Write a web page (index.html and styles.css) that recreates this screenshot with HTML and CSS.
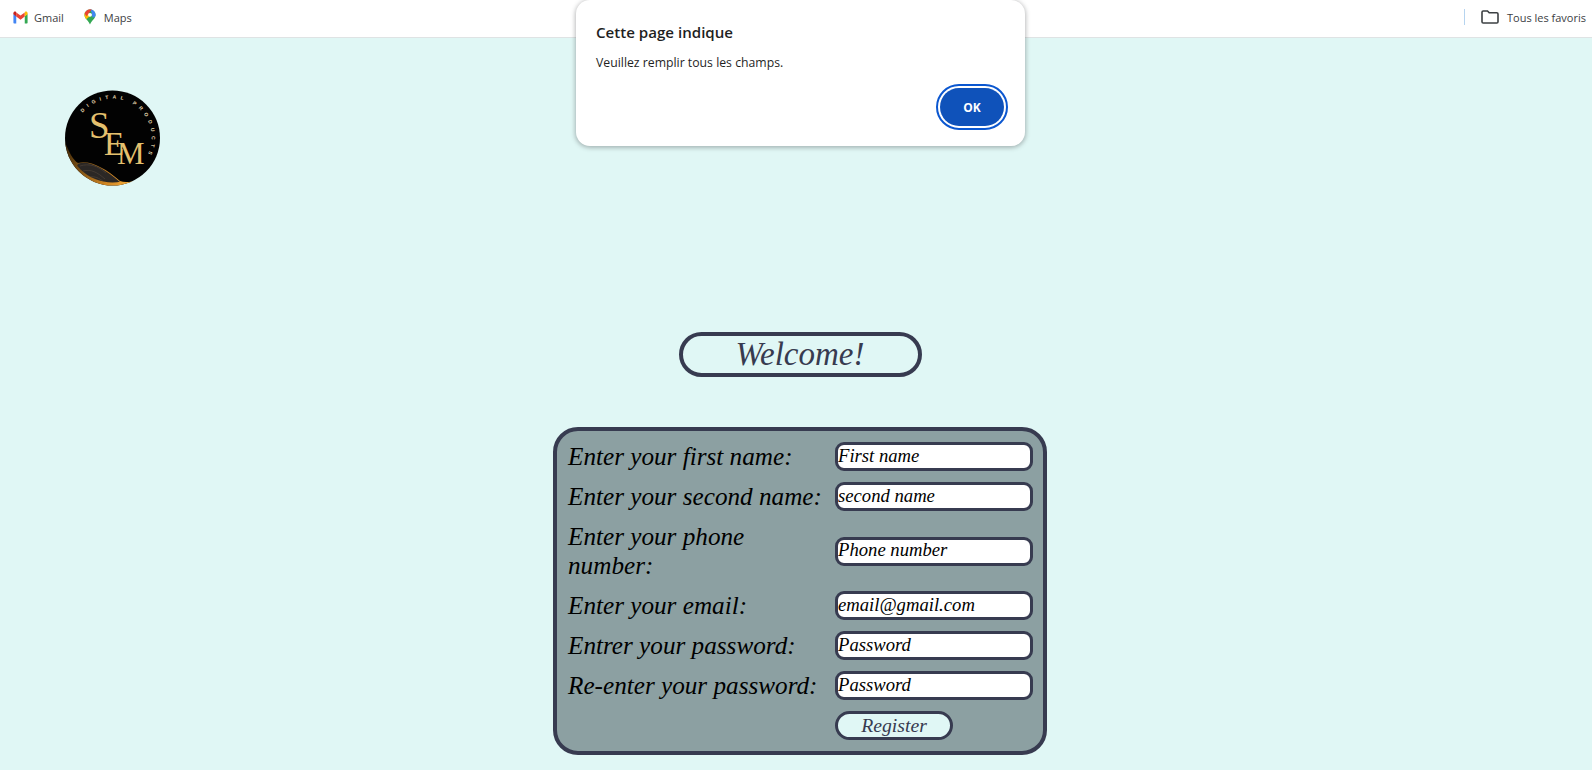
FILE: index.html
```html
<!DOCTYPE html>
<html lang="fr">
<head>
<meta charset="utf-8">
<title>Register</title>
<link rel="stylesheet" href="styles.css">
</head>
<body>
<nav class="bookmarks">
  <a class="bookmark">
    <svg class="icon-gmail" viewBox="0 0 24 24" width="17" height="17">
      <path fill="#4285F4" d="M2 19.500c0 .6.5 1 1 1h3V10L2 7z"/>
      <path fill="#34A853" d="M18 20.500h3c.6 0 1-.4 1-1V7l-4 3z"/>
      <path fill="#EA4335" d="M6 10.500l6 4.500 6-4.500V4.800l-6 4.500-6-4.500z"/>
      <path fill="#FBBC04" d="M18 4.800v5.700l4-3V6c0-2-2.200-3-3.800-1.800z"/>
      <path fill="#C5221F" d="M2 7.500l4 3V4.800l-.2-.6C4.200 3 2 4 2 6z"/>
    </svg>
    <span>Gmail</span>
  </a>
  <a class="bookmark">
    <svg class="icon-maps" viewBox="0 0 14 18" width="12" height="16">
      <defs><clipPath id="pin"><path d="M7 0a6.500 6.500 0 0 0-6.500 6.500C.5 11 5 13 7 18c2-5 6.500-7 6.500-11.500A6.500 6.500 0 0 0 7 0z"/></clipPath></defs>
      <g clip-path="url(#pin)">
        <rect width="14" height="18" fill="#34A853"/>
        <path fill="#FBBC04" d="M0 3h5l3 4-7 6-1-2z"/>
        <path fill="#4285F4" d="M7 0h7v8l-4 2-1-6z"/>
        <path fill="#EA4335" d="M0 4L5-1h5L3 8z"/>
      </g>
      <circle cx="7" cy="6.500" r="2.300" fill="#fff"/>
    </svg>
    <span>Maps</span>
  </a>
  <div class="bookmarks-end">
    <i class="separator"></i>
    <a class="bookmark">
      <svg class="icon-folder" viewBox="0 0 18 14" width="18" height="14">
        <path fill="none" stroke="#3c4043" stroke-width="1.600" d="M1 2.300c0-.7.5-1.300 1.200-1.300h4.300l1.700 1.800h7.600c.7 0 1.200.5 1.200 1.200v7.700c0 .7-.5 1.300-1.200 1.300H2.200c-.7 0-1.200-.6-1.200-1.300z"/>
      </svg>
      <span>Tous les favoris</span>
    </a>
  </div>
</nav>

<main class="page">
  <svg class="logo" viewBox="0 0 95 96" width="95" height="96">
    <defs>
      <clipPath id="disc"><circle cx="47.500" cy="48" r="47.500"/></clipPath>
      <clipPath id="disc-inner"><circle cx="47.500" cy="47" r="45.500"/></clipPath>
      <linearGradient id="edge" x1="0" y1="0" x2="1" y2="0.300">
        <stop offset="0" stop-color="#3a2508"/>
        <stop offset=".4" stop-color="#8a5a18"/>
        <stop offset=".75" stop-color="#d08522"/>
        <stop offset="1" stop-color="#efa638"/>
      </linearGradient>
      <path id="ring" d="M17.600 22.900A39 39 0 0 1 81.300 67.500"/>
    </defs>
    <g clip-path="url(#disc)">
      <rect width="95" height="96" fill="#020202"/>
      <path fill="url(#edge)" d="M0 52C4 62 8 70 13 73 25 70 40 78 55 91 60 93 66 92 74 90V100H0z"/>
      <g clip-path="url(#disc-inner)">
        <path fill="#2b2725" d="M13 74C22 70 36 76 55 92L50 100H20L8 84z"/>
        <path fill="none" stroke="#5a4c40" stroke-width=".5" d="M15 76c9-3 18 0 26 7M18 81c8-2 14 1 22 8M24 87c6-1 10 1 15 5"/>
      </g>
    </g>
    <text class="logo-ring"><textPath href="#ring">DIGITAL PRODUCTS</textPath></text>
    <text class="logo-mark"><tspan class="logo-s" x="24" y="48">S</tspan><tspan class="logo-e" x="39" y="65">E</tspan><tspan class="logo-m" x="52" y="74">M</tspan></text>
  </svg>

  <h1 class="welcome">Welcome!</h1>

  <form class="signup">
    <label class="field-label">Enter your first name:</label>
    <input class="field" placeholder="First name">
    <label class="field-label">Enter your second name:</label>
    <input class="field" placeholder="second name">
    <label class="field-label">Enter your phone number:</label>
    <input class="field" placeholder="Phone number">
    <label class="field-label">Enter your email:</label>
    <input class="field" placeholder="email@gmail.com">
    <label class="field-label">Entrer your password:</label>
    <input class="field" placeholder="Password">
    <label class="field-label">Re-enter your password:</label>
    <input class="field" placeholder="Password">
    <span></span>
    <button class="register" type="button">Register</button>
  </form>
</main>

<div class="alert" role="alertdialog">
  <h2 class="alert-title">Cette page indique</h2>
  <p class="alert-text">Veuillez remplir tous les champs.</p>
  <div class="alert-actions"><button class="alert-ok" type="button">OK</button></div>
</div>
</body>
</html>
```
FILE: styles.css
```css
* { box-sizing: border-box; }

html, body {
  margin: 0;
  height: 770px;
  overflow: hidden;
}

body {
  background: #e0f7f5;
  font-family: "Liberation Serif", serif;
}

.bookmarks {
  display: flex;
  align-items: center;
  gap: 20px;
  height: 38px;
  padding: 0 6px 3px 12px;
  background: #fff;
  border-bottom: 1px solid #dfe3e4;
  font: 11px "Open Sans", "Noto Sans", sans-serif;
  color: #3c4043;
}

.bookmark {
  display: flex;
  align-items: center;
  gap: 5px;
}

.icon-maps { margin-right: 3px; }

.bookmarks-end {
  display: flex;
  align-items: center;
  margin-left: auto;
  gap: 16px;
}

.bookmarks-end .bookmark { gap: 8px; }

.separator {
  width: 1px;
  height: 16px;
  background: #b6d4ef;
}

.page {
  display: flex;
  flex-direction: column;
  align-items: center;
  padding: 52px 0 0 8px;
}

.logo {
  align-self: flex-start;
  margin-left: 57px;
  display: block;
}

.logo-ring {
  font: bold 5px "Liberation Sans", sans-serif;
  letter-spacing: 4.200px;
  fill: #e8d9b0;
}

.logo-mark {
  font-family: "Liberation Serif", serif;
  fill: #e4c06e;
}
.logo-s { font-size: 37px; }
.logo-e { font-size: 33px; }
.logo-m { font-size: 31px; }

.welcome {
  width: 243px;
  height: 45px;
  margin: 146px 0 50px;
  border: 4px solid #373b50;
  border-radius: 23px;
  font-size: 33px;
  font-weight: 400;
  font-style: italic;
  line-height: 37px;
  text-align: center;
  color: #373b50;
}

.signup {
  display: grid;
  grid-template-columns: 267px 198px;
  align-items: center;
  align-content: start;
  row-gap: 11px;
  width: 494px;
  height: 328px;
  padding: 11px 0 0 11px;
  background: #8ca0a2;
  border: 4px solid #373b50;
  border-radius: 25px;
}

.field-label {
  font-size: 25.200px;
  font-style: italic;
  line-height: 29px;
  color: #000;
}

.field {
  width: 198px;
  height: 29px;
  padding: 0 0 2px;
  background: #fff;
  border: 3px solid #373b50;
  border-radius: 9px;
  font: italic 18.670px "Liberation Serif", serif;
  outline: none;
}

.field::placeholder {
  color: #000;
  opacity: 1;
}

.register {
  width: 118px;
  height: 29px;
  padding: 0;
  background: #e0f7f5;
  border: 3px solid #373b50;
  border-radius: 15px;
  font: italic 19.700px "Liberation Serif", serif;
  color: #373b50;
}

.alert {
  position: absolute;
  top: 0;
  left: 576px;
  width: 449px;
  height: 146px;
  padding: 22px 21px 0 20px;
  background: #fff;
  border-radius: 14px;
  box-shadow: 0 1px 4px 1px rgba(60, 64, 67, .35);
  font-family: "Open Sans", "Noto Sans", sans-serif;
  color: #1f1f1f;
}

.alert-title {
  margin: 0;
  font-size: 15.100px;
  line-height: 20px;
  font-weight: 600;
}

.alert-text {
  margin: 12px 0 0;
  font-size: 12.250px;
  line-height: 18px;
}

.alert-actions {
  display: flex;
  justify-content: flex-end;
  margin-top: 16px;
}

.alert-ok {
  width: 64px;
  height: 38px;
  padding: 0;
  background: #0f52ba;
  border: 0;
  border-radius: 19px;
  outline: 2px solid #0b57d0;
  outline-offset: 2px;
  font: 700 12px "Open Sans", "Noto Sans", sans-serif;
  color: #fff;
}
```
